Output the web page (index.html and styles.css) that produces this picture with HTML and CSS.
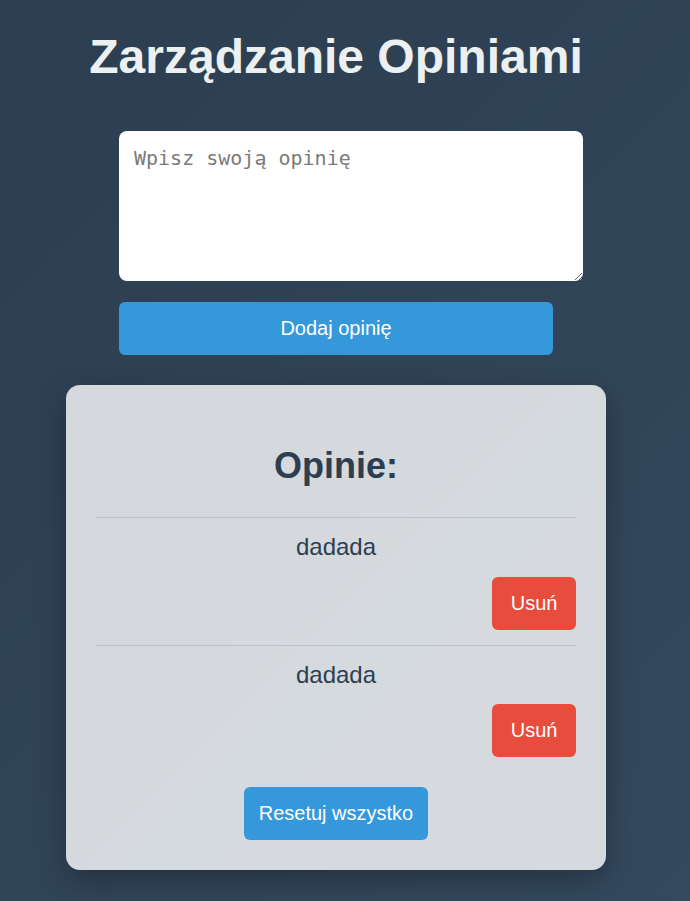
FILE: index.html
```html
<!DOCTYPE html>
<html lang="pl">
<head>
<meta charset="utf-8">
<title>Zarządzanie Opiniami</title>
<link rel="stylesheet" href="styles.css">
</head>
<body>
<div class="page">
  <h1 class="title">Zarządzanie Opiniami</h1>
  <form class="form">
    <textarea class="input" placeholder="Wpisz swoją opinię"></textarea>
    <button type="button" class="btn btn-add">Dodaj opinię</button>
  </form>
  <section class="card">
    <h2 class="card-title">Opinie:</h2>
    <div class="item">
      <p class="item-text">dadada</p>
      <button type="button" class="btn btn-delete">Usuń</button>
    </div>
    <div class="item">
      <p class="item-text">dadada</p>
      <button type="button" class="btn btn-delete">Usuń</button>
    </div>
    <div class="reset-row">
      <button type="button" class="btn btn-reset">Resetuj wszystko</button>
    </div>
  </section>
</div>
</body>
</html>
```
FILE: styles.css
```css
html, body {
  margin: 0;
  padding: 0;
}
body {
  min-height: 901px;
  background: linear-gradient(135deg, #2c3e50 0%, #34495e 100%);
  font-family: "Liberation Sans", Arial, sans-serif;
  color: #2c3e50;
}
.page {
  width: 540px;
  margin-left: 66px;
  padding-top: 29px;
  padding-bottom: 31px;
}
.title {
  margin: 0;
  font-size: 48px;
  font-weight: bold;
  color: #ecf0f1;
  text-align: center;
}
.form {
  width: 434px;
  margin: 47px auto 0;
}
.input {
  display: block;
  width: 100%;
  height: 120px;
  padding: 15px;
  margin: 0 0 21px;
  border: none;
  border-radius: 8px;
  background: #ffffff;
  font-family: "DejaVu Sans Mono", monospace;
  font-size: 20px;
  color: #333;
  outline: none;
}
.input::placeholder {
  color: #7a7a7a;
}
.btn {
  border: none;
  border-radius: 6px;
  color: #ffffff;
  font-family: "Liberation Sans", Arial, sans-serif;
  font-size: 20px;
  padding: 15px;
  cursor: pointer;
  line-height: 23px;
}
.btn-add {
  display: block;
  width: 100%;
  background: #3498db;
}
.card {
  margin-top: 30px;
  padding: 30px;
  background: rgba(255, 255, 255, 0.8);
  border-radius: 14px;
  box-shadow: 0 10px 30px rgba(0, 0, 0, 0.3);
}
.card-title {
  margin: 30px 0;
  font-size: 36px;
  font-weight: bold;
  text-align: center;
  color: #2c3e50;
}
.item {
  display: flex;
  flex-direction: column;
  align-items: flex-end;
  border-top: 1px solid #bfc3c8;
  padding: 15px 0;
}
.item-text {
  align-self: stretch;
  margin: 0 0 15.5px;
  font-size: 24px;
  text-align: center;
  color: #2c3e50;
}
.btn-delete {
  background: #e74c3c;
  padding: 15px 18.5px;
}
.reset-row {
  display: flex;
  justify-content: center;
  margin-top: 15px;
}
.btn-reset {
  background: #3498db;
}
```
